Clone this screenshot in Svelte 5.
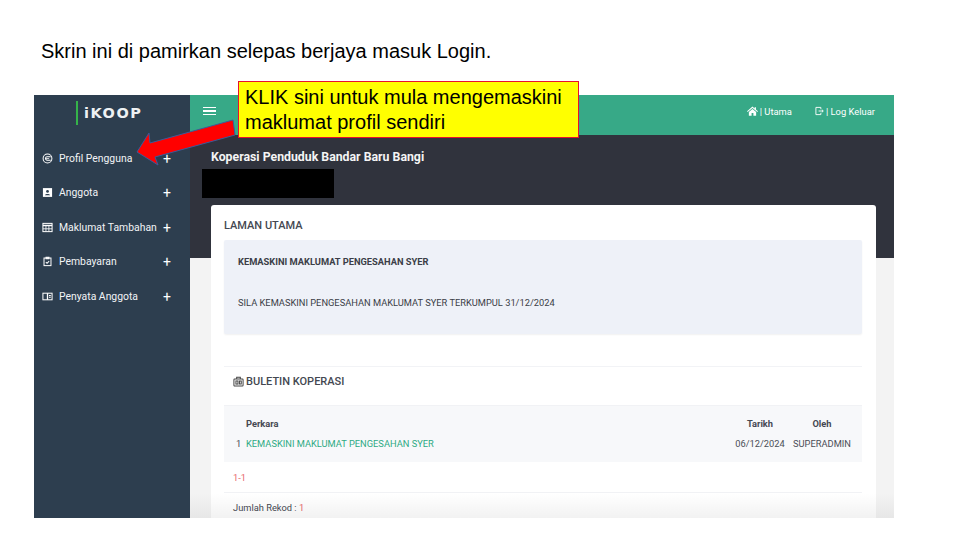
<script>
  const MENU = [
    { label: 'Profil Pengguna', icon: 'face' },
    { label: 'Anggota', icon: 'contact' },
    { label: 'Maklumat Tambahan', icon: 'calc' },
    { label: 'Pembayaran', icon: 'check' },
    { label: 'Penyata Anggota', icon: 'book' },
  ]
</script>

<div class="slide">
  <h1 class="slide-title">Skrin ini di pamirkan selepas berjaya masuk Login.</h1>

  <div class="shot">
    <aside class="sidebar">
      <div class="logo">
        <span class="logo-bar"></span>
        <span class="logo-text">iKOOP</span>
      </div>
      <nav class="menu">
        {#each MENU as item}
          <div class="menu-item">
            <svg class="menu-icon" viewBox="0 0 12 12" fill="none" stroke="#fff" stroke-width="1.1">
              {#if item.icon === 'face'}
                <circle cx="6" cy="6" r="4.800" />
                <path d="M9.500 4.200H5.600a1.800 1.800 0 0 0 0 3.600H9.500" />
                <path d="M4.300 6h3.500" stroke-width=".8" />
              {:else if item.icon === 'contact'}
                <rect x="1" y="1.200" width="10" height="9.600" fill="#fff" stroke="none" />
                <circle cx="6" cy="4.800" r="1.500" fill="#2c3e50" stroke="none" />
                <path d="M3.200 9c.3-1.800 5.300-1.800 5.600 0z" fill="#2c3e50" stroke="none" />
              {:else if item.icon === 'calc'}
                <rect x="1" y="1.500" width="10" height="9" />
                <path d="M1 3.800h10" stroke-width="1.600" />
                <path d="M4.300 4.400v6M7.500 4.400v6M1 7.400h10" stroke-width=".9" />
              {:else if item.icon === 'check'}
                <rect x="2.200" y="2.200" width="7.600" height="8.300" />
                <path d="M4.400 1.400h3.200v1.600H4.400z" fill="#fff" />
                <path d="M4.200 6.600l1.300 1.300 2.300-2.400" />
              {:else}
                <rect x="1" y="2.400" width="10" height="7.200" />
                <path d="M6 2.400v7.200" stroke-width="1.400" />
                <path d="M7.600 4.800h2M7.600 6.800h2" />
              {/if}
            </svg>
            <span class="menu-label">{item.label}</span>
            <span class="menu-plus">+</span>
          </div>
        {/each}
      </nav>
    </aside>

    <div class="main">
      <header class="topbar">
        <div class="burger"><i></i><i></i><i></i></div>
        <div class="top-links">
          <span class="top-link">
            <svg width="11" height="10" viewBox="0 0 12 11" fill="#fff">
              <path d="M6 .6 0 5.800l.7.8L6 2.100l5.300 4.500.7-.8-2.200-1.900V1.300H8.300v1.400zM2 6.600v4h3V7.800h2v2.800h3v-4L6 3.200z" />
            </svg>
            <span>| Utama</span>
          </span>
          <span class="top-link">
            <svg width="9" height="10" viewBox="0 0 10 10" fill="none" stroke="#fff" stroke-width="1">
              <path d="M6.500 3V1H1v8h5.500V7M4 5h5M7.600 3.500 9.200 5 7.600 6.500" />
            </svg>
            <span>| Log Keluar</span>
          </span>
        </div>
      </header>

      <div class="content">
        <div class="hero">
          <div class="org">Koperasi Penduduk Bandar Baru Bangi</div>
          <div class="redacted"></div>
        </div>

        <section class="card">
          <h2 class="card-title">LAMAN UTAMA</h2>

          <div class="notice">
            <h3 class="notice-title">KEMASKINI MAKLUMAT PENGESAHAN SYER</h3>
            <p class="notice-text">SILA KEMASKINI PENGESAHAN MAKLUMAT SYER TERKUMPUL 31/12/2024</p>
          </div>

          <h2 class="bulletin-title">
            <svg width="11" height="11" viewBox="0 0 12 12" fill="none" stroke="#444" stroke-width="1.1">
              <rect x="1" y="3.200" width="10" height="7.800" rx=".8" />
              <path d="M4 3.200V1.400h4v1.800" />
              <rect x="3.200" y="5.400" width="2.200" height="3.400" />
              <path d="M7 5.400h2v3.400H7z" />
            </svg>
            <span>BULETIN KOPERASI</span>
          </h2>

          <div class="table">
            <div class="row head">
              <span class="no"></span>
              <span class="subject">Perkara</span>
              <span class="date">Tarikh</span>
              <span class="by">Oleh</span>
            </div>
            <div class="row">
              <span class="no">1</span>
              <span class="subject link">KEMASKINI MAKLUMAT PENGESAHAN SYER</span>
              <span class="date">06/12/2024</span>
              <span class="by">SUPERADMIN</span>
            </div>
          </div>

          <div class="pager">1-1</div>
          <div class="total">Jumlah Rekod : <span class="count">1</span></div>
        </section>
        <div class="fade"></div>
      </div>
    </div>

    <!-- anotasi di atas skrin -->
    <svg class="arrow" width="106" height="54" viewBox="0 0 106 54">
      <path d="M3 37 15 18 16 28 99 5 101 20 21 42 24 50z" fill="#ff0000" stroke="#3b5a9a" stroke-width="1" />
    </svg>
    <div class="callout">KLIK sini untuk mula mengemaskini<br />maklumat profil sendiri</div>
  </div>
</div>

<style>
  :global(body) {
    background: #fff;
  }

  .slide {
    width: 960px;
    height: 540px;
    overflow: hidden;
    display: flex;
    flex-direction: column;
    font-family: Roboto, sans-serif;
  }

  .slide-title {
    margin: 40px 0 0 41px;
    height: 55px;
    font-family: 'Liberation Sans', Arial, sans-serif;
    font-size: 20px;
    line-height: 23px;
    font-weight: 400;
    color: #000;
  }

  .shot {
    position: relative;
    width: 860px;
    height: 423px;
    margin-left: 34px;
    display: flex;
  }

  /* sidebar */
  .sidebar {
    width: 156px;
    flex-shrink: 0;
    background: #2d3e4f;
    color: #fff;
  }

  .logo {
    height: 36px;
    display: flex;
    align-items: center;
    gap: 6px;
    padding-left: 42px;
  }

  .logo-bar {
    width: 2px;
    height: 24px;
    background: #35b34a;
  }

  .logo-text {
    font-family: 'DejaVu Sans', sans-serif;
    font-size: 14.500px;
    font-weight: 700;
    letter-spacing: 1.500px;
    color: #eef1f3;
  }

  .menu {
    padding-top: 10px;
    display: flex;
    flex-direction: column;
  }

  .menu-item {
    height: 34.500px;
    display: flex;
    align-items: center;
    padding-left: 8px;
    font-size: 10.400px;
  }

  .menu-icon {
    width: 11px;
    height: 11px;
    flex-shrink: 0;
  }

  .menu-label {
    margin-left: 6px;
    flex: 1;
    white-space: nowrap;
    color: #f2f4f6;
  }

  .menu-plus {
    width: 27px;
    font-size: 14px;
    font-weight: 400;
    padding-top: 1px;
  }

  /* main */
  .main {
    flex: 1;
    display: flex;
    flex-direction: column;
    background: #f3f3f3;
    min-width: 0;
  }

  .topbar {
    height: 40px;
    flex-shrink: 0;
    background: #37a987;
    display: flex;
    align-items: center;
    justify-content: space-between;
    padding: 0 19px 8px 13px;
    box-sizing: border-box;
  }

  .burger {
    display: flex;
    flex-direction: column;
    gap: 2px;
    width: 13px;
  }

  .burger i {
    height: 1.500px;
    background: #fff;
  }

  .top-links {
    display: flex;
    gap: 23px;
    color: #fff;
    font-size: 9.400px;
  }

  .top-link {
    display: flex;
    align-items: center;
    gap: 2px;
    white-space: pre;
  }

  .content {
    position: relative;
    flex: 1;
    min-height: 0;
    overflow: hidden;
  }

  .hero {
    height: 123px;
    background: #30333d;
    padding: 15px 0 0 21px;
    box-sizing: border-box;
  }

  .org {
    font-size: 12.300px;
    font-weight: 700;
    line-height: 14px;
    color: #f4f4f4;
  }

  .redacted {
    width: 132px;
    height: 29px;
    margin: 5px 0 0 -9px;
    background: #000;
  }

  .card {
    margin: -53px 18px 0 21px;
    position: relative;
    background: #fff;
    border-radius: 3px;
    padding: 0 14px 0 13px;
    height: 400px;
  }

  .card-title {
    margin: 0;
    padding-top: 14px;
    height: 35px;
    box-sizing: border-box;
    font-size: 11px;
    line-height: 13px;
    font-weight: 500;
    color: #444851;
  }

  .notice {
    height: 94px;
    box-sizing: border-box;
    background: #eef1f8;
    border-radius: 2px;
    padding: 16px 14px 0;
    box-shadow: 0 1px 2px rgba(0, 0, 0, 0.06);
    font-size: 9.300px;
    line-height: 11px;
    color: #3b3e47;
  }

  .notice-title {
    margin: 0;
    font-size: 9.300px;
    font-weight: 700;
    line-height: 11px;
  }

  .notice-text {
    margin: 30px 0 0;
  }

  .bulletin-title {
    margin: 32px 0 0;
    height: 39px;
    border-top: 1px solid #f2f3f6;
    box-sizing: border-box;
    padding: 9px 0 0 9px;
    display: flex;
    align-items: flex-start;
    gap: 2px;
    font-size: 11px;
    line-height: 12px;
    font-weight: 500;
    color: #444851;
  }

  .table {
    background: #f7f8fa;
    border-top: 1px solid #f1f2f5;
    height: 57px;
    box-sizing: border-box;
    padding-top: 12px;
    font-size: 9.300px;
  }

  .row {
    display: flex;
    height: 20px;
    line-height: 11px;
    color: #4b4e57;
  }

  .row.head {
    font-weight: 700;
    color: #454852;
  }

  .no {
    width: 22px;
    box-sizing: border-box;
    padding-left: 12px;
  }

  .subject {
    flex: 1;
  }

  .link {
    color: #2eaa83;
  }

  .date {
    width: 58px;
    margin-right: 4px;
    white-space: nowrap;
    text-align: center;
  }

  .by {
    width: 58px;
    margin-right: 11px;
    white-space: nowrap;
    text-align: center;
  }

  .pager {
    height: 31px;
    box-sizing: border-box;
    padding: 10px 0 0 9px;
    border-bottom: 1px solid #f1f2f5;
    font-size: 9.300px;
    line-height: 11px;
    color: #e8686f;
  }

  .total {
    padding: 9px 0 0 9px;
    font-size: 9.300px;
    line-height: 11px;
    color: #454852;
  }

  .count {
    color: #e8686f;
  }

  .fade {
    position: absolute;
    left: 0;
    right: 0;
    bottom: 0;
    height: 25px;
    background: linear-gradient(rgba(0, 0, 0, 0), rgba(0, 0, 0, 0.05));
  }

  /* anotasi */
  .arrow {
    position: absolute;
    left: 100px;
    top: 20px;
  }

  .callout {
    position: absolute;
    left: 204px;
    top: -14px;
    width: 341px;
    height: 57px;
    box-sizing: border-box;
    background: #ffff00;
    border: 1px solid #e8112d;
    padding: 3px 0 0 6px;
    font-family: 'Liberation Sans', Arial, sans-serif;
    font-size: 20px;
    line-height: 25px;
    color: #000;
  }
</style>
